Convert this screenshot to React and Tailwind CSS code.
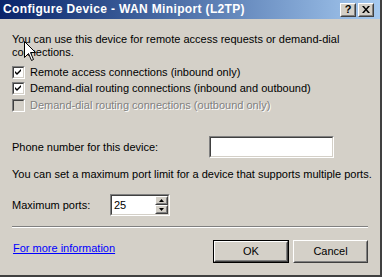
import React from "react";

const font = { fontFamily: '"Liberation Sans", Arial, sans-serif' };

function Sunken({ className = "", children }) {
  return (
    <div className={`border border-t-[#808080] border-l-[#808080] border-b-white border-r-white ${className}`}>
      <div className="w-full h-full border border-t-[#404040] border-l-[#404040] border-b-[#d4d0c8] border-r-[#d4d0c8] bg-white">
        {children}
      </div>
    </div>
  );
}

function Raised({ className = "", innerClass = "", children }) {
  return (
    <div className={`border border-t-white border-l-white border-b-[#404040] border-r-[#404040] bg-[#d4d0c8] ${className}`}>
      <div className={`w-full h-full border border-t-[#d4d0c8] border-l-[#d4d0c8] border-b-[#808080] border-r-[#808080] flex items-center justify-center ${innerClass}`}>
        {children}
      </div>
    </div>
  );
}

function CheckBox({ checked, disabled, label }) {
  return (
    <div className="flex items-center">
      <div className="w-[13px] h-[13px] border border-t-[#808080] border-l-[#808080] border-b-white border-r-white ml-[12px]">
        <div
          className={`w-full h-full border border-t-[#404040] border-l-[#404040] border-b-[#d4d0c8] border-r-[#d4d0c8] ${
            disabled ? "bg-[#d4d0c8]" : "bg-white"
          } flex items-center justify-center`}
        >
          {checked && (
            <svg width="7" height="7" viewBox="0 0 7 7" className="block">
              <path d="M0 2 L2 4 L6 0 L6 2 L2 6 L0 4 Z" fill="#000" />
            </svg>
          )}
        </div>
      </div>
      <span
        className={`ml-[5px] text-[11px] leading-[13px] ${
          disabled ? "text-[#808080] [text-shadow:1px_1px_0_#ffffff]" : "text-black"
        }`}
      >
        {label}
      </span>
    </div>
  );
}

export default function App() {
  return (
    <div className="relative w-[382px] h-[277px] bg-[#d4d0c8] overflow-hidden" style={font}>
      <div className="w-[382px] h-[277px] flex flex-col border-r-2 border-b-2 border-r-[#404040] border-b-[#404040]">
        {/* Title bar */}
        <div className="h-[19px] flex items-center bg-gradient-to-r from-[#0a246a] to-[#a6caf0] pl-[3px] pr-[6px]">
          <span className="text-white font-bold text-[12px] tracking-[0.35px] leading-[19px] flex-1 whitespace-nowrap">
            Configure Device - WAN Miniport (L2TP)
          </span>
          <Raised className="w-[16px] h-[14px]">
            <span className="text-black font-bold text-[11px] leading-none">?</span>
          </Raised>
          <Raised className="w-[16px] h-[14px] ml-[2px]">
            <svg width="8" height="7" viewBox="0 0 8 7" className="block">
              <path d="M0 0 L2 0 L4 2.5 L6 0 L8 0 L5 3.5 L8 7 L6 7 L4 4.5 L2 7 L0 7 L3 3.5 Z" fill="#000" />
            </svg>
          </Raised>
        </div>

        {/* Body */}
        <div className="flex flex-col pl-[12px] pr-[12px]">
          <p className="mt-[14px] text-[11px] leading-[13px] text-black w-[330px]">
            You can use this device for remote access requests or demand-dial connections.
          </p>
        </div>

        <div className="flex flex-col mt-[5px]">
          <div className="h-[16px] flex items-center">
            <CheckBox checked label="Remote access connections (inbound only)" />
          </div>
          <div className="h-[17px] flex items-center">
            <CheckBox checked label="Demand-dial routing connections (inbound and outbound)" />
          </div>
          <div className="h-[16px] flex items-center">
            <CheckBox disabled label="Demand-dial routing connections (outbound only)" />
          </div>
        </div>

        <div className="flex items-center mt-[23px] pl-[12px] h-[22px]">
          <span className="text-[11px] leading-[13px] text-black w-[197px]">Phone number for this device:</span>
          <Sunken className="w-[125px] h-[22px]" />
        </div>

        <p className="mt-[10px] pl-[12px] text-[11px] leading-[13px] text-black whitespace-nowrap">
          You can set a maximum port limit for a device that supports multiple ports.
        </p>

        <div className="flex items-center mt-[13px] pl-[12px] h-[22px]">
          <span className="text-[11px] leading-[13px] text-black w-[98px]">Maximum ports:</span>
          <Sunken className="w-[60px] h-[22px]">
            <div className="flex h-full">
              <span className="flex-1 text-[11px] leading-[18px] pl-[2px] text-black">25</span>
              <div className="flex flex-col w-[13px] h-full">
                <Raised className="w-[13px] flex-1">
                  <svg width="5" height="3" viewBox="0 0 5 3" className="block">
                    <path d="M2.5 0 L5 3 L0 3 Z" fill="#000" />
                  </svg>
                </Raised>
                <Raised className="w-[13px] flex-1">
                  <svg width="5" height="3" viewBox="0 0 5 3" className="block">
                    <path d="M0 0 L5 0 L2.5 3 Z" fill="#000" />
                  </svg>
                </Raised>
              </div>
            </div>
          </Sunken>
        </div>

        <div className="mt-[10px] mx-[12px] w-[356px] border-t border-t-[#808080] border-b border-b-white" />

        <div className="flex items-start mt-[12px] pl-[13px] pr-[12px]">
          <a className="text-[11px] leading-[13px] text-[#0000ff] underline mt-[2px] flex-1 cursor-pointer">
            For more information
          </a>
          <div className="border border-black">
            <Raised className="w-[74px] h-[21px]">
              <span className="text-[11px] text-black">OK</span>
            </Raised>
          </div>
          <Raised className="w-[75px] h-[23px] ml-[4px]">
            <span className="text-[11px] text-black">Cancel</span>
          </Raised>
        </div>
      </div>

      {/* Mouse cursor */}
      <svg
        className="absolute left-[24px] top-[41px]"
        width="13"
        height="21"
        viewBox="0 0 13 21"
      >
        <path
          d="M0.5 0.5 L0.5 16.5 L4.5 12.5 L7.5 19.5 L9.5 18.5 L6.5 11.5 L11.5 11.5 Z"
          fill="#ffffff"
          stroke="#000000"
          strokeWidth="1"
        />
      </svg>
    </div>
  );
}
